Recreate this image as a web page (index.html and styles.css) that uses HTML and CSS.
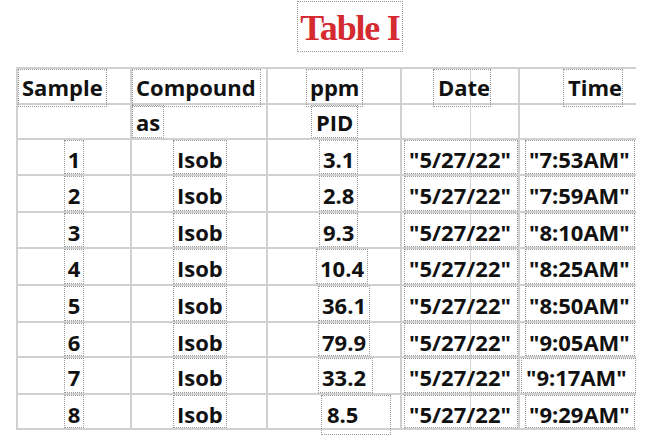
FILE: index.html
```html
<!DOCTYPE html>
<html>
<head>
<meta charset="utf-8">
<link rel="stylesheet" href="styles.css">
</head>
<body>
<div class="page">
  <div class="title-row"><span class="title">Table I</span></div>
  <div class="tbl">
    <div class="cell c1 r-h"><span class="bx w-sample">Sample</span></div>
    <div class="cell c2 r-h"><span class="bx w-comp">Compound</span></div>
    <div class="cell c3 r-h"><span class="bx h-ppm">ppm</span></div>
    <div class="cell c4 r-h"><span class="bx h-date">Date</span></div>
    <div class="cell c5 r-h"><span class="bx h-time">Time</span></div>

    <div class="cell c1 r-s"></div>
    <div class="cell c2 r-s"><span class="bx">as</span></div>
    <div class="cell c3 r-s"><span class="bx h-pid">PID</span></div>
    <div class="cell c4 r-s"></div>
    <div class="cell c5 r-s"></div>

    <div class="cell c1 d"><span class="bx">1</span></div>
    <div class="cell c2 d"><span class="bx">Isob</span></div>
    <div class="cell c3 d"><span class="bx p-a">3.1</span></div>
    <div class="cell c4 d"><span class="bx dt">"5/27/22"</span></div>
    <div class="cell c5 d"><span class="bx tm">"7:53AM"</span></div>

    <div class="cell c1 d"><span class="bx">2</span></div>
    <div class="cell c2 d"><span class="bx">Isob</span></div>
    <div class="cell c3 d"><span class="bx p-a">2.8</span></div>
    <div class="cell c4 d"><span class="bx dt">"5/27/22"</span></div>
    <div class="cell c5 d"><span class="bx tm">"7:59AM"</span></div>

    <div class="cell c1 d"><span class="bx">3</span></div>
    <div class="cell c2 d"><span class="bx">Isob</span></div>
    <div class="cell c3 d"><span class="bx p-a">9.3</span></div>
    <div class="cell c4 d"><span class="bx dt">"5/27/22"</span></div>
    <div class="cell c5 d"><span class="bx tm">"8:10AM"</span></div>

    <div class="cell c1 d"><span class="bx">4</span></div>
    <div class="cell c2 d"><span class="bx">Isob</span></div>
    <div class="cell c3 d"><span class="bx p-b">10.4</span></div>
    <div class="cell c4 d"><span class="bx dt">"5/27/22"</span></div>
    <div class="cell c5 d"><span class="bx tm">"8:25AM"</span></div>

    <div class="cell c1 d"><span class="bx">5</span></div>
    <div class="cell c2 d"><span class="bx">Isob</span></div>
    <div class="cell c3 d"><span class="bx p-c">36.1</span></div>
    <div class="cell c4 d"><span class="bx dt">"5/27/22"</span></div>
    <div class="cell c5 d"><span class="bx tm">"8:50AM"</span></div>

    <div class="cell c1 d"><span class="bx">6</span></div>
    <div class="cell c2 d"><span class="bx">Isob</span></div>
    <div class="cell c3 d"><span class="bx p-c">79.9</span></div>
    <div class="cell c4 d"><span class="bx dt">"5/27/22"</span></div>
    <div class="cell c5 d"><span class="bx tm">"9:05AM"</span></div>

    <div class="cell c1 d"><span class="bx">7</span></div>
    <div class="cell c2 d"><span class="bx">Isob</span></div>
    <div class="cell c3 d"><span class="bx p-c p-wide">33.2</span></div>
    <div class="cell c4 d"><span class="bx dt">"5/27/22"</span></div>
    <div class="cell c5 d"><span class="bx tm tm-left">"9:17AM"</span></div>

    <div class="cell c1 d"><span class="bx">8</span></div>
    <div class="cell c2 d"><span class="bx">Isob</span></div>
    <div class="cell c3 d"><span class="bx p-d">8.5</span></div>
    <div class="cell c4 d"><span class="bx dt">"5/27/22"</span></div>
    <div class="cell c5 d"><span class="bx tm">"9:29AM"</span></div>
  </div>
</div>
</body>
</html>
```

FILE: styles.css
```css
html, body {
  margin: 0;
  padding: 0;
  background: #ffffff;
}

.page {
  width: 648px;
  height: 437px;
  overflow: hidden;
  font-family: "Open Sans", "Liberation Sans", sans-serif;
  font-weight: 700;
  font-size: 22px;
  color: #111111;
}

.title-row {
  height: 67px;
  padding-top: 1px;
  box-sizing: border-box;
}

.title {
  display: inline-block;
  box-sizing: border-box;
  margin-left: 297px;
  width: 106px;
  height: 51px;
  padding-top: 6px;
  border: 1px dotted #999999;
  text-align: center;
  font-family: "Liberation Serif", "Times New Roman", serif;
  font-weight: 700;
  font-size: 36px;
  line-height: 40px;
  letter-spacing: -1.2px;
  color: #d42a30;
}

.tbl {
  display: grid;
  margin-left: 16px;
  width: 620px;
  grid-template-columns: 114px 136px 134px 118px 118px;
  grid-template-rows: 36px 35px 36px 37px 36px 37px 37px 35px 37px 35px;
  border-top: 2px solid #d0d0d0;
}

.cell {
  display: flex;
  align-items: stretch;
  box-sizing: border-box;
  border-left: 2px solid #d0d0d0;
  border-bottom: 2px solid #d0d0d0;
  min-width: 0;
}

.bx {
  display: block;
  box-sizing: border-box;
  border: 1px dotted #999999;
  padding: 4px 3px 0;
  line-height: 28px;
  white-space: nowrap;
}

.r-h .bx { padding-top: 3px; height: 38px; }
.r-s .bx { padding-top: 2px; }
.d .bx { padding-top: 4px; }

/* column 1: sample */
.c1.d { justify-content: center; }
.w-sample { width: 89px; padding-left: 3px; }

/* column 2: compound */
.w-comp { width: 129px; padding-left: 3px; }
.c2.d .bx { margin-left: 41px; }

/* column 3: ppm */
.h-ppm { margin-left: 38px; padding-left: 3px; padding-right: 3px; }
.h-pid { margin-left: 43px; padding-left: 4px; padding-right: 4px; }
.p-a { margin-left: 51px; }
.p-b { margin-left: 48px; }
.p-c { margin-left: 50px; }
.p-wide { padding-right: 6px; }
.p-d { margin-left: 53px; width: 70px; padding-left: 5px; height: 40px; }

/* column 4: date, with the faint inner rule */
.c4 {
  background-image: linear-gradient(#d4d4d4, #d4d4d4);
  background-size: 1px 100%;
  background-position: 68px 0;
  background-repeat: no-repeat;
}
.h-date { margin-left: 31px; width: 58px; padding-left: 4px; }
.dt { margin-left: 2px; width: 114px; padding-left: 4px; }

/* column 5: time */
.h-time { margin-left: 43px; width: 60px; padding-left: 4px; }
.tm { margin-left: 5px; width: 110px; padding-left: 3px; }
.tm-left { margin-left: 1px; width: 116px; padding-left: 4px; }
```
